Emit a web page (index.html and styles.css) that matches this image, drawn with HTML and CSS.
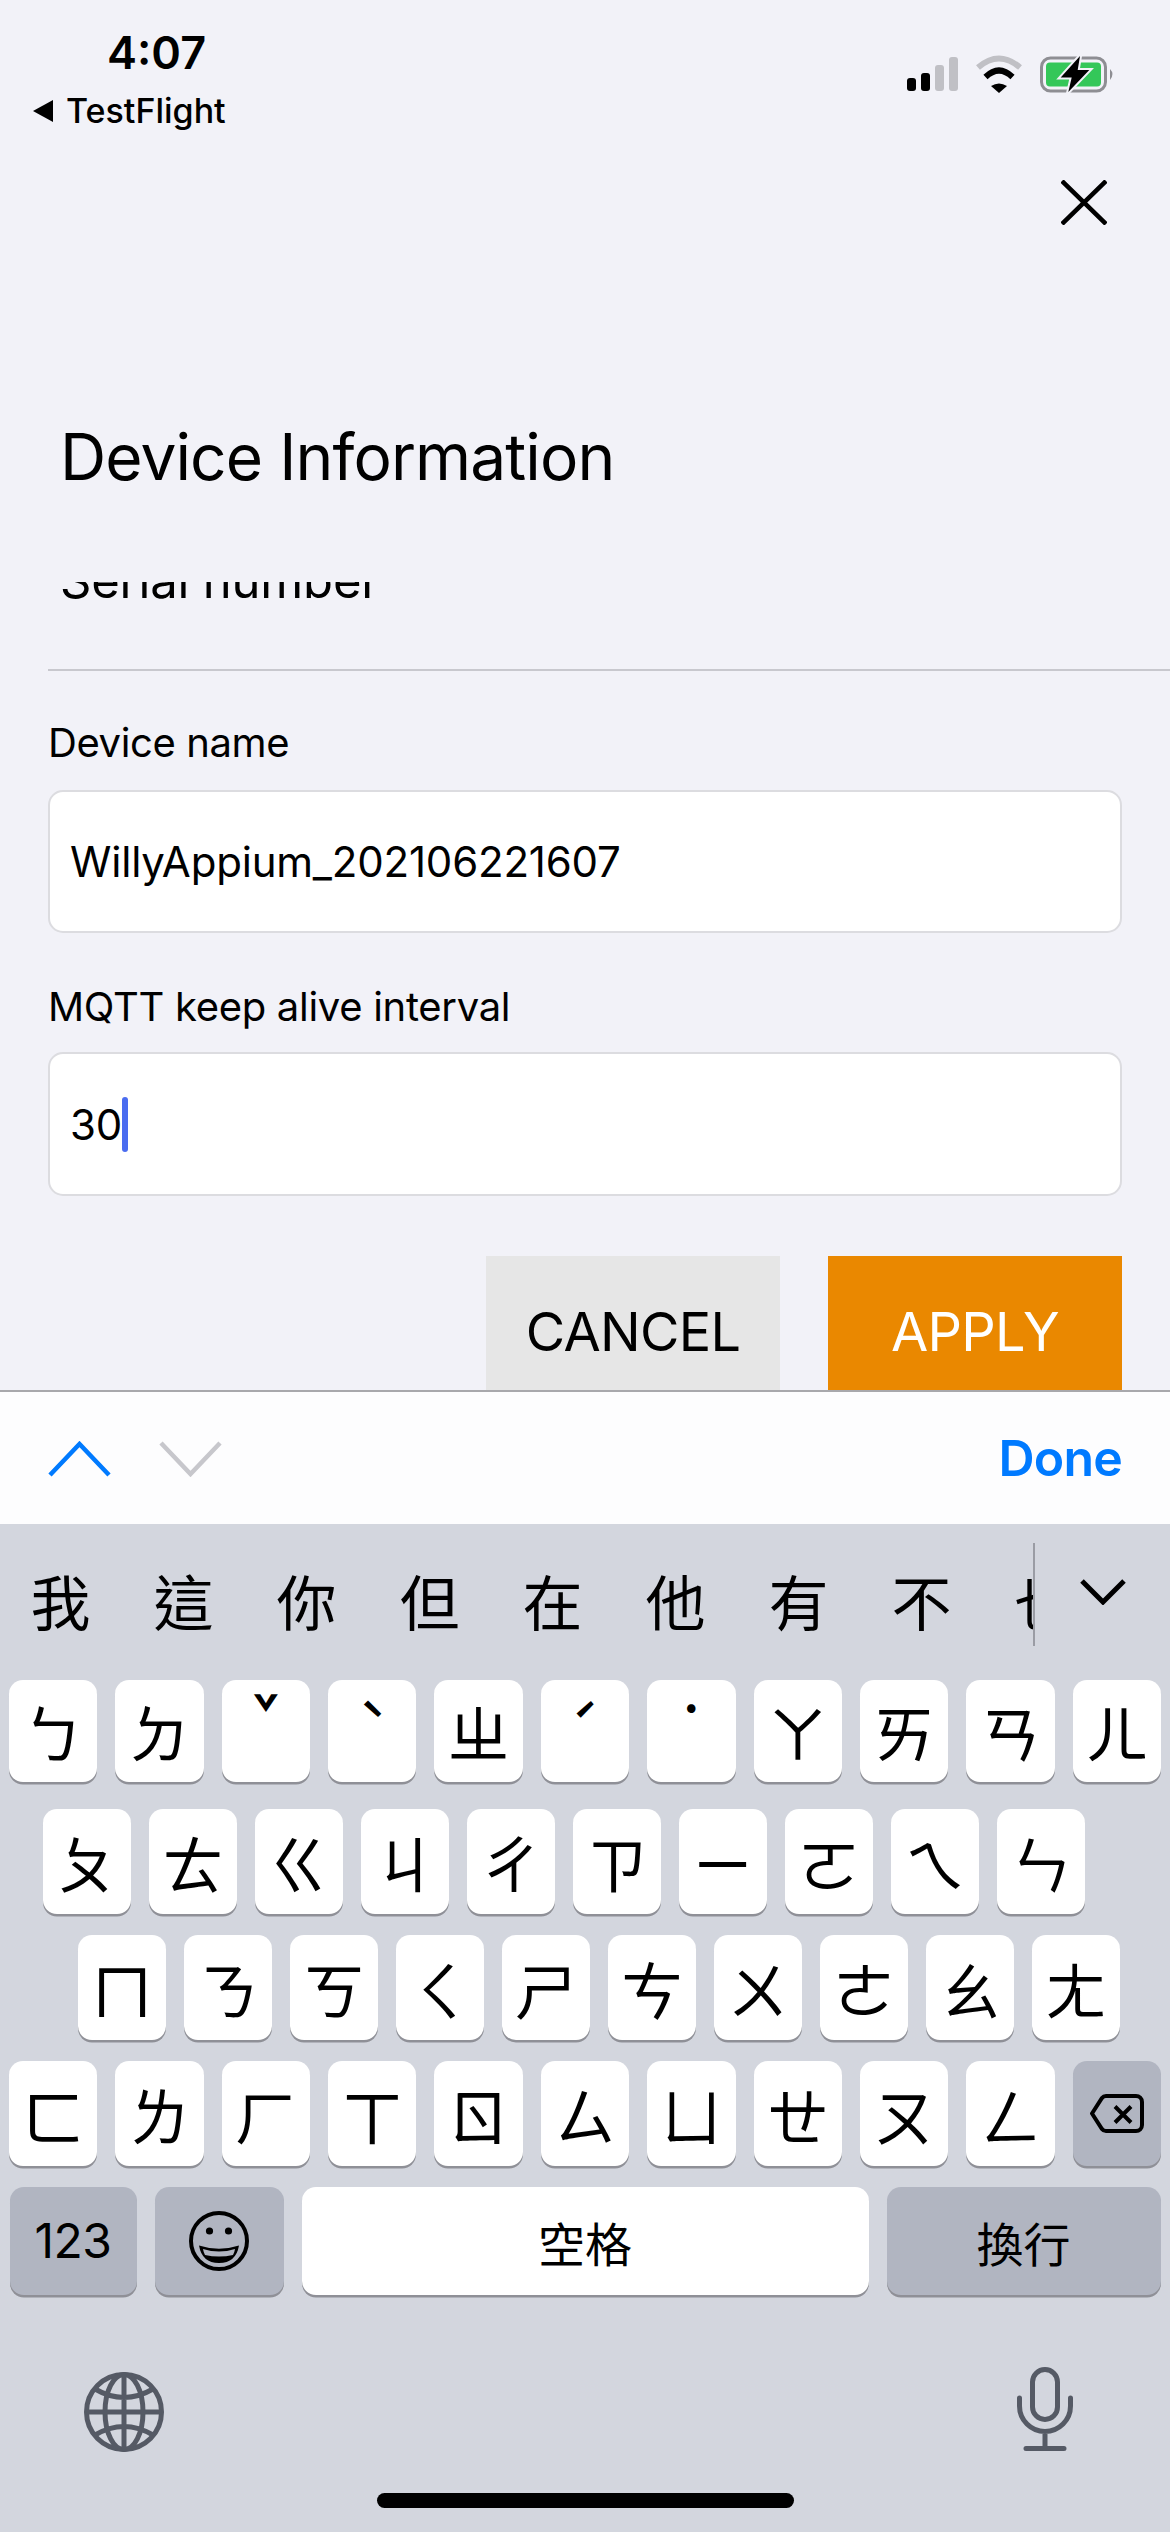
FILE: index.html
```html
<!DOCTYPE html>
<html lang="zh-Hant">
<head>
<meta charset="utf-8">
<title>Device Information</title>
<link rel="stylesheet" href="styles.css">
</head>
<body>
<main class="screen">
  <header class="status">
    <div class="status-left">
      <div class="time">4:07</div>
      <div class="back"><svg class="back-arrow" viewBox="0 0 20 22"><path d="M20 0V22L0 11Z"/></svg><span>TestFlight</span></div>
    </div>
    <div class="status-right">
      <svg class="signal" viewBox="0 0 51 36"><rect x="0" y="23" width="9" height="13" rx="3"/><rect x="14" y="18" width="9" height="18" rx="3"/><rect class="off" x="28" y="10" width="9" height="26" rx="3"/><rect class="off" x="42" y="2" width="9" height="34" rx="3"/></svg>
      <svg class="wifi" viewBox="0 0 48 38"><path class="wifi-off" d="M3 12.5Q24 -5.5 45 12.5"/><path class="wifi-on" d="M10.5 22Q24 9 37.5 22"/><path d="M16 31Q24 26 32 31L24 38Z"/></svg>
      <svg class="battery" viewBox="0 0 75 38"><rect class="batt-shell" x="1.5" y="3" width="64" height="33" rx="9"/><rect class="batt-fill" x="6" y="7.5" width="55" height="24" rx="4"/><path class="batt-nub" d="M70 14Q75 19 70 25Z"/><path class="batt-bolt" d="M40 1L20.7 22.5H31.7L28.3 37L49.3 15H37.7Z"/></svg>
    </div>
  </header>
  <div class="close-row"><svg class="close" viewBox="0 0 46 45"><path d="M1 1L45 44M45 1L1 44"/></svg></div>
  <h1 class="title">Device Information</h1>
  <div class="clip"><span>Serial number</span></div>
  <hr class="divider">
  <form class="form">
    <label class="label">Device name</label>
    <div class="field">WillyAppium_202106221607</div>
    <label class="label label-second">MQTT keep alive interval</label>
    <div class="field field-active">30<i class="caret"></i></div>
    <div class="actions">
      <div class="btn btn-cancel">CANCEL</div>
      <div class="btn btn-apply">APPLY</div>
    </div>
  </form>
</main>

<div class="toolbar">
  <div class="nav-arrows">
    <svg class="chev" viewBox="0 0 63 36"><path class="chev-on" d="M2 34L31.5 3L61 34"/></svg>
    <svg class="chev" viewBox="0 0 63 36"><path class="chev-off" d="M2 2L31.5 33L61 2"/></svg>
  </div>
  <div class="done">Done</div>
</div>

<section class="keyboard">
  <div class="cand-bar">
    <div class="cands"><span>我</span><span>這</span><span>你</span><span>但</span><span>在</span><span>他</span><span>有</span><span>不</span><span>也</span></div>
    <svg class="cand-more" viewBox="0 0 46 26"><path d="M2 2L23 23L44 2"/></svg>
  </div>
  <div class="rows">
    <div class="row row-full row-first">
      <div class="key">ㄅ</div><div class="key">ㄉ</div><div class="key tone tone-3">ˇ</div><div class="key tone tone-4">ˋ</div><div class="key">ㄓ</div><div class="key tone tone-2">ˊ</div><div class="key tone tone-5">˙</div><div class="key">ㄚ</div><div class="key">ㄞ</div><div class="key">ㄢ</div><div class="key">ㄦ</div>
    </div>
    <div class="row row-second">
      <div class="key">ㄆ</div><div class="key">ㄊ</div><div class="key">ㄍ</div><div class="key">ㄐ</div><div class="key">ㄔ</div><div class="key">ㄗ</div><div class="key">ㄧ</div><div class="key">ㄛ</div><div class="key">ㄟ</div><div class="key">ㄣ</div>
    </div>
    <div class="row row-third">
      <div class="key">ㄇ</div><div class="key">ㄋ</div><div class="key">ㄎ</div><div class="key">ㄑ</div><div class="key">ㄕ</div><div class="key">ㄘ</div><div class="key">ㄨ</div><div class="key">ㄜ</div><div class="key">ㄠ</div><div class="key">ㄤ</div>
    </div>
    <div class="row row-full">
      <div class="key">ㄈ</div><div class="key">ㄌ</div><div class="key">ㄏ</div><div class="key">ㄒ</div><div class="key">ㄖ</div><div class="key">ㄙ</div><div class="key">ㄩ</div><div class="key">ㄝ</div><div class="key">ㄡ</div><div class="key">ㄥ</div>
      <div class="key key-dark"><svg class="del" viewBox="0 0 54 39"><path d="M16 2H46a6 6 0 0 1 6 6V31a6 6 0 0 1-6 6H16a5 5 0 0 1-4-2L2 19.5L12 4a5 5 0 0 1 4-2Z"/><path d="M25 12.5L41 28.5M41 12.5L25 28.5"/></svg></div>
    </div>
    <div class="row row-bottom">
      <div class="key key-dark key-num">123</div>
      <div class="key key-dark key-emoji"><svg class="emoji" viewBox="0 0 60 60"><circle class="face" cx="30" cy="30" r="28"/><circle cx="20.5" cy="20" r="3.6"/><circle cx="39.5" cy="20" r="3.6"/><path d="M10 34.5Q30 41 50 34.5Q47 52 30 52Q13 52 10 34.5Z"/><path class="teeth" d="M14 38Q30 43 46 38Q45.5 41.5 44 44Q30 47 16 44Q14.500 41.500 14 38Z"/></svg></div>
      <div class="key key-space">空格</div>
      <div class="key key-dark key-return">換行</div>
    </div>
  </div>
  <div class="sys-row">
    <svg class="globe" viewBox="0 0 80 80"><circle cx="40" cy="40" r="37.500"/><ellipse cx="40" cy="40" rx="19" ry="37.500"/><path d="M40 2.500V77.500M2.500 40H77.500M11 17Q40 34 69 17M11 63Q40 46 69 63"/></svg>
    <svg class="mic" viewBox="0 0 56 85"><rect x="15.500" y="2.500" width="25" height="50" rx="12.500"/><path d="M2.500 31V39a25.500 25.500 0 0 0 51 0V31M28 65V81M9 81.500H47"/></svg>
  </div>
  <div class="home"></div>
</section>
</body>
</html>
```
FILE: styles.css
```css
* { box-sizing: border-box; }
html, body { margin: 0; padding: 0; }
body {
  width: 1170px;
  height: 2532px;
  overflow: hidden;
  background: #f2f2f8;
  color: #000;
  font-family: Inter, "Noto Sans CJK TC", sans-serif;
  display: flex;
  flex-direction: column;
}

/* screen */
.screen { height: 1390px; overflow: hidden; flex: none; }
.status { height: 140px; padding: 0 55px 0 33px; display: flex; justify-content: space-between; }
.time { margin: 30px 0 0 74px; font-size: 45px; line-height: 46px; font-weight: 600; }
.back { margin-top: 17px; height: 36px; display: flex; align-items: center; gap: 13px; font-size: 34px; font-weight: 500; line-height: 36px; }
.back-arrow { width: 20px; height: 22px; }
.status-right { margin-top: 55px; height: 38px; display: flex; gap: 17px; align-items: flex-start; }
.signal { width: 51px; height: 36px; }
.signal .off { fill: #c0c0c5; }
.wifi { width: 48px; height: 38px; }
.wifi-off, .wifi-on { fill: none; stroke-width: 6; }
.wifi-off { stroke: #c0c0c5; }
.wifi-on { stroke: #000; }
.battery { width: 75px; height: 38px; }
.batt-shell { fill: none; stroke: #8e8e93; stroke-width: 3; }
.batt-fill { fill: #34c759; }
.batt-nub { fill: #8e8e93; }
.batt-bolt { fill: #000; stroke: #f2f2f8; stroke-width: 4; paint-order: stroke; }

.close-row { padding: 40px 63px 0 0; display: flex; justify-content: flex-end; }
.close { width: 46px; height: 45px; display: block; }
.close path { fill: none; stroke: #000; stroke-width: 4.5; }

.title { margin: 192px 0 85px; padding-left: 60px; font-size: 64px; line-height: 80px; font-weight: 400; letter-spacing: -0.9px; }
.clip { height: 24px; overflow: hidden; padding-left: 60px; display: flex; align-items: flex-end; font-size: 49px; line-height: 50px; letter-spacing: -0.2px; }
.divider { margin: 63px 0 0 48px; border: 0; height: 2px; background: #c8c8ce; }

.form { padding: 0 48px; }
.label { display: block; margin: 47px 0 22px; font-size: 40px; line-height: 50px; letter-spacing: -0.4px; }
.label-second { margin: 49px 0 20px; letter-spacing: -0.3px; }
.field { height: 143px; background: #fff; border: 2px solid #dcdce0; border-radius: 15px; padding-left: 20px; display: flex; align-items: center; font-size: 42px; letter-spacing: -0.2px; }
.field-active { height: 144px; }
.caret { width: 6px; height: 55px; background: #4a6cf0; border-radius: 3px; }
.actions { margin-top: 60px; display: flex; justify-content: flex-end; gap: 48px; }
.btn { width: 294px; height: 150px; display: flex; align-items: center; justify-content: center; font-size: 54px; letter-spacing: -0.7px; }
.btn-cancel { background: #e6e6e6; color: #000; }
.btn-apply { background: #ea8800; color: #fff; }

/* toolbar */
.toolbar { flex: none; height: 134px; border-top: 2px solid #a8a8ac; background: #fdfdfe; padding: 0 48px; display: flex; justify-content: space-between; align-items: center; }
.nav-arrows { display: flex; gap: 48px; margin-top: 2px; }
.chev { width: 63px; height: 36px; display: block; }
.chev path { fill: none; stroke-width: 4.5; }
.chev-on { stroke: #007aff; }
.chev-off { stroke: #c7c7cc; }
.done { font-size: 50px; font-weight: 600; color: #007aff; letter-spacing: -0.8px; line-height: 60px; }

/* keyboard */
.keyboard { flex: 1; background: #d3d6de; }
.cand-bar { height: 156px; padding-top: 19px; display: flex; align-items: flex-start; }
.cands { width: 1035px; height: 103px; flex: none; overflow: hidden; display: flex; border-right: 2px solid #9a9ca4; }
.cands span { flex: none; width: 123px; height: 103px; padding-top: 17px; text-align: center; font-size: 60px; line-height: 80px; font-family: "Noto Sans CJK TC", sans-serif; }
.cands span:first-child { margin-left: -1px; }
.cand-more { width: 46px; height: 26px; margin: 36px 0 0 45px; }
.cand-more path { fill: none; stroke: #000; stroke-width: 5; }

.rows { display: flex; flex-direction: column; gap: 21px; }
.row { display: flex; gap: 18px; }
.row-full { padding: 0 9px; }
.row-first { margin-bottom: 6px; }
.row-first .key { height: 102px; }
.row-second { padding-left: 43px; }
.row-third { padding-left: 78px; }
.row-second .key, .row-third .key { flex: none; width: 88px; }
.key {
  flex: 1;
  height: 105px;
  background: #fff;
  border-radius: 14px;
  box-shadow: 0 2.5px 0 #8f9097;
  display: flex;
  align-items: center;
  justify-content: center;
  font-size: 62px;
  line-height: 1;
  font-family: "Noto Sans CJK TC", sans-serif;
}
.tone { font-size: 42px; font-weight: 700; }
.tone-2 { padding-bottom: 24px; }
.tone-3 { padding-bottom: 40px; }
.tone-4 { padding-bottom: 26px; }
.tone-5 { padding-bottom: 48px; }
.key-dark { background: #b1b5c1; }
.del { width: 54px; height: 39px; }
.del path { fill: none; stroke: #000; stroke-width: 4; }
.row-bottom { padding: 0 9.500px; }
.row-bottom .key { flex: none; height: 108px; font-size: 47px; }
.row-bottom .key-num { width: 127px; font-family: Inter, sans-serif; font-size: 48px; font-weight: 400; letter-spacing: -0.5px; }
.row-bottom .key-emoji { width: 129px; }
.row-bottom .key-space { width: 567px; }
.row-bottom .key-return { width: 274px; }
.emoji { width: 60px; height: 60px; }
.face { fill: none; stroke: #000; stroke-width: 4; }
.teeth { fill: #b1b5c1; }

.sys-row { margin-top: 72px; height: 85px; padding: 0 97px 0 84px; display: flex; justify-content: space-between; align-items: flex-end; }
.globe { width: 80px; height: 80px; }
.globe circle, .globe ellipse, .globe path { fill: none; stroke: #555a65; stroke-width: 5; }
.mic { width: 56px; height: 85px; }
.mic rect, .mic path { fill: none; stroke: #555a65; stroke-width: 5; stroke-linecap: round; }
.home { width: 417px; height: 15px; margin: 41px 0 0 377px; background: #000; border-radius: 8px; }
```
